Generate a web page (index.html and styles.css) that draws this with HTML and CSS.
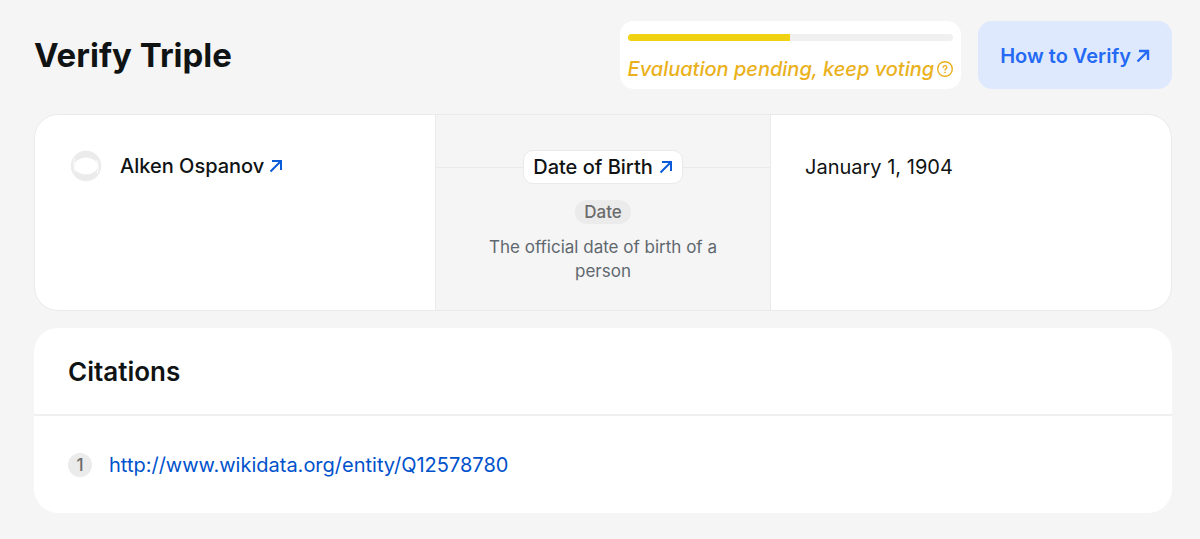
FILE: index.html
```html
<!DOCTYPE html>
<html lang="en">
<head>
    <meta charset="UTF-8">
    <meta name="viewport" content="width=device-width, initial-scale=1.0">
    <title>Verify Triple</title>
    <link rel="stylesheet" href="styles.css">
</head>
<body>
    <main class="page">
        <header class="page-header">
            <h1>Verify Triple</h1>

            <div class="status">
                <div class="progress"><div class="progress-fill" style="width: 50%"></div></div>
                <div class="status-label">
                    <span>Evaluation pending, keep voting</span>
                    <svg class="help-icon" viewBox="0 0 16 16" fill="none" stroke="currentColor" stroke-linecap="round" stroke-linejoin="round">
                        <circle cx="8" cy="8" r="7.3" stroke-width="1.4"/>
                        <path d="M6.2 6.4a1.8 1.8 0 1 1 2.7 1.5c-.6.35-.9.55-.9 1.2" stroke-width="1.4"/>
                        <circle cx="8" cy="11.3" r=".4" stroke-width=".8"/>
                    </svg>
                </div>
            </div>

            <a class="how-to" href="#">How to Verify
                <svg class="arrow" viewBox="0 0 14 14"><path d="M3 2h9v9M12 2 1.5 12.5"/></svg>
            </a>
        </header>

        <section class="triple">
            <div class="subject">
                <svg class="avatar" viewBox="0 0 32 32">
                    <circle cx="16" cy="16" r="15.2" fill="#ebebeb"/>
                    <ellipse cx="16" cy="16" rx="11.6" ry="8.6" fill="#fff"/>
                    <path d="M4.6 8.5C3.4 13 3.6 18 5.4 22M27.4 23.5c1.2-4.500 1-9.500-.8-13.500" fill="none" stroke="#fff" stroke-width="1"/>
                </svg>
                <a class="entity" href="#">Alken Ospanov
                    <svg class="arrow" viewBox="0 0 14 14"><path d="M3 2h9v9M12 2 1.5 12.5"/></svg>
                </a>
            </div>

            <div class="predicate">
                <div class="connector">
                    <a class="entity predicate-name" href="#">Date of Birth
                        <svg class="arrow" viewBox="0 0 14 14"><path d="M3 2h9v9M12 2 1.5 12.5"/></svg>
                    </a>
                </div>
                <span class="type">Date</span>
                <p>The official date of birth of a person</p>
            </div>

            <div class="object">January 1, 1904</div>
        </section>

        <section class="citations">
            <h2>Citations</h2>
            <ol>
                <li>
                    <span class="number">1</span>
                    <a href="http://www.wikidata.org/entity/Q12578780">http://www.wikidata.org/entity/Q12578780</a>
                </li>
            </ol>
        </section>
    </main>
</body>
</html>
```
FILE: styles.css
```css
* {
    box-sizing: border-box;
}

body {
    margin: 0;
    background-color: #f5f5f5;
    color: #101314;
    font-family: Inter, "Liberation Sans", sans-serif;
    font-size: 20px;
    line-height: 24px;
}

a {
    color: #0052cc;
    text-decoration: none;
}

h1, h2, p, ol {
    margin: 0;
}

.page {
    padding: 21px 28px 26px 34px;
}

/* Header */
.page-header {
    display: flex;
    align-items: stretch;
    gap: 17px;
    margin-bottom: 25px;
}

h1 {
    margin-right: auto;
    align-self: center;
    font-size: 33px;
    line-height: 40px;
    font-weight: 700;
}

.status {
    padding: 13px 8px 8px;
    background-color: #fff;
    border-radius: 14px;
}

.progress {
    height: 7px;
    margin-bottom: 16px;
    background-color: #f0f0f0;
    border-radius: 4px;
    overflow: hidden;
}

.progress-fill {
    height: 100%;
    background-color: #f0d212;
}

.status-label {
    display: flex;
    align-items: center;
    gap: 3px;
    color: #eab11c;
    font-style: italic;
    font-weight: 500;
}

.help-icon {
    width: 16px;
    height: 16px;
}

.how-to {
    display: flex;
    align-items: center;
    gap: 5px;
    padding: 2px 22px 0;
    background-color: #dfe9fd;
    border-radius: 14px;
    color: #256af4;
    font-weight: 600;
}

.arrow {
    width: 14px;
    height: 14px;
    fill: none;
    stroke: #0b5cd8;
    stroke-width: 2;
}

.how-to .arrow {
    stroke: currentColor;
    stroke-width: 2.4;
}

/* Subject - predicate - object */
.triple {
    display: grid;
    grid-template-columns: 25fr 21fr 25fr;
    min-height: 197px;
    margin-bottom: 17px;
    background-color: #fff;
    border: 1px solid #e8eaec;
    border-radius: 24px;
    overflow: hidden;
}

.subject {
    display: flex;
    align-items: center;
    align-self: start;
    gap: 18px;
    padding: 35px;
}

.avatar {
    width: 32px;
    height: 32px;
}

.entity {
    display: flex;
    align-items: center;
    gap: 5px;
    color: #101314;
    font-weight: 500;
    line-height: 32px;
}

.predicate {
    display: flex;
    flex-direction: column;
    align-items: center;
    padding: 35px 0 24px;
    background-color: #f5f5f5;
    border: solid #e8eaec;
    border-width: 0 1px;
    color: #5f686f;
    font-size: 17px;
    text-align: center;
}

.connector {
    display: flex;
    align-items: center;
    align-self: stretch;
    margin-bottom: 16px;
}

.connector::before,
.connector::after {
    content: "";
    flex: 1;
    height: 1px;
    background-color: #e8eaec;
}

.predicate-name {
    gap: 6px;
    padding: 0 9px;
    background-color: #fff;
    border: 1px solid #e8eaec;
    border-radius: 10px;
    font-size: 20px;
}

.type {
    padding: 0 9px;
    margin-bottom: 11px;
    background-color: #ebebeb;
    border-radius: 12px;
    color: #6b6b6b;
    font-weight: 500;
}

.predicate p {
    max-width: 264px;
}

.object {
    padding: 40px 34px;
}

/* Citations */
.citations {
    background-color: #fff;
    border-radius: 24px;
}

h2 {
    padding: 28px 34px 26px;
    border-bottom: 2px solid #f0f0f0;
    font-size: 26px;
    line-height: 32px;
    font-weight: 600;
}

ol {
    padding: 37px 34px 36px;
    list-style: none;
}

li {
    display: flex;
    align-items: center;
    gap: 17px;
}

.number {
    width: 24px;
    border-radius: 12px;
    background-color: #ebebeb;
    color: #6b6b6b;
    font-size: 17px;
    font-weight: 500;
    text-align: center;
}
```
